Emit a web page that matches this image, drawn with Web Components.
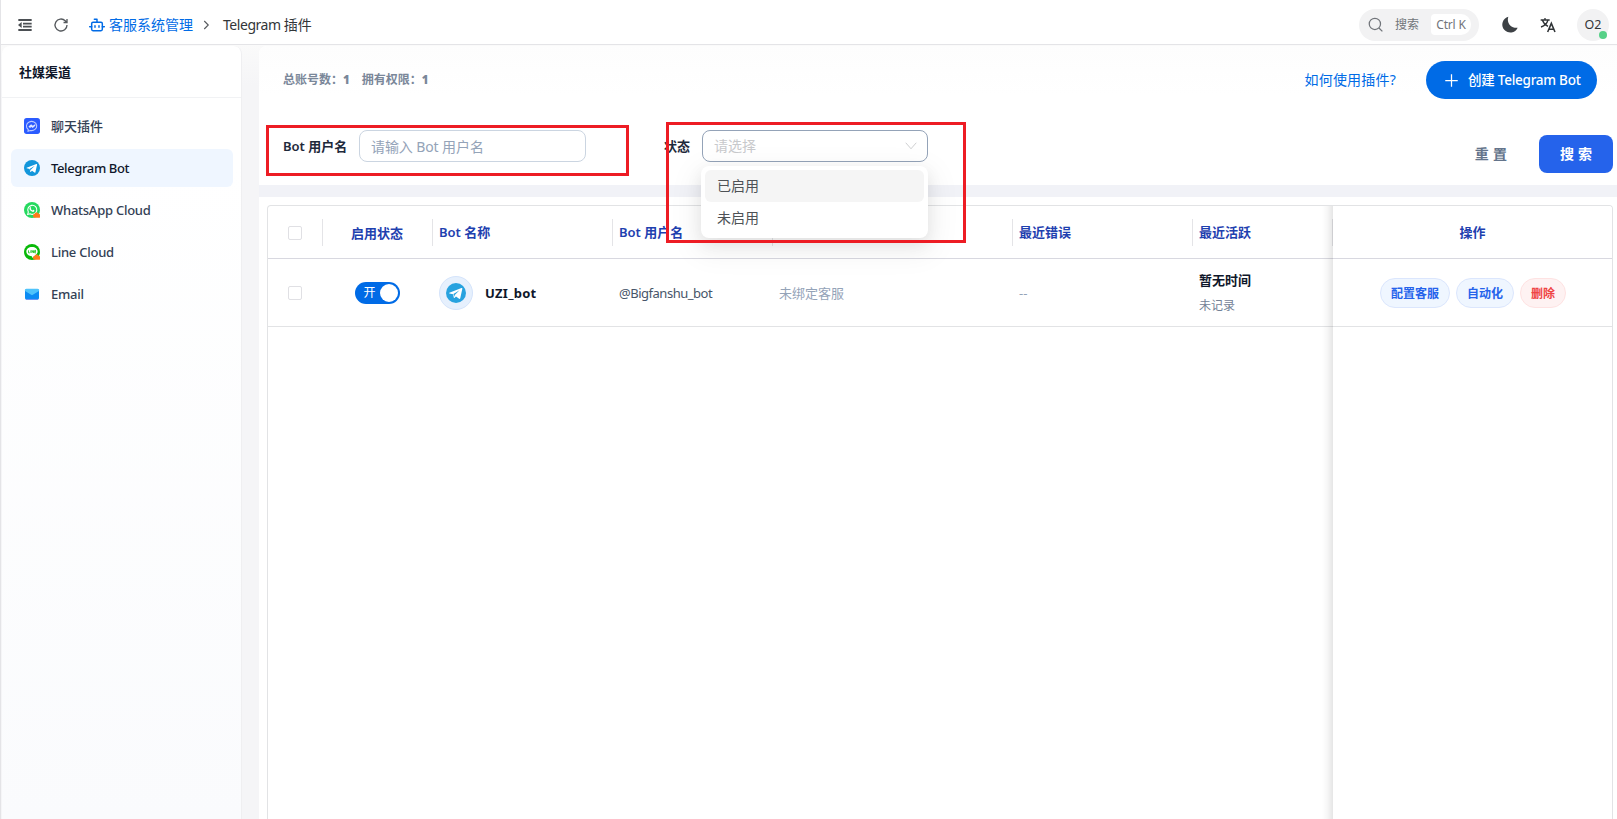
<!DOCTYPE html>
<html lang="zh-CN">
<head>
<meta charset="utf-8">
<title>Telegram 插件</title>
<style>
  html, body {
    margin: 0;
    height: 100%;
    overflow: hidden;
  }

  body {
    font-family: "Noto Sans", "Noto Sans CJK SC", sans-serif;
    font-size: 13px;
    line-height: 20px;
    color: #323639;
    background: #fff;
  }
</style>
</head>
<body>
<admin-page></admin-page>

<script>
// every element clones its own template into an open shadow root
function define(name, html, setup) {
  const template = document.createElement("template");
  template.innerHTML = html;

  customElements.define(name, class extends HTMLElement {
    constructor() {
      super();
      this.attachShadow({ mode: "open" }).appendChild(template.content.cloneNode(true));
    }

    connectedCallback() {
      if (setup) setup(this, this.shadowRoot);
    }
  });
}

const ICONS = {
  fold: `<path fill="currentColor" d="M2 3h20v3H2zM9 8.500h13v2.600H9zM9 13h13v2.600H9zM2 18h20v3H2zM7 7.500v9L1.500 12z"/>`,
  reload: `<path d="M21 12a9 9 0 1 1-2.700-6.400L21 8.200M21 3v5.200h-5.200" fill="none" stroke="currentColor" stroke-width="2"/>`,
  bot: `<g fill="none" stroke="currentColor" stroke-width="2.200" stroke-linejoin="round" stroke-linecap="round"><rect x="4" y="8" width="16" height="12.500" rx="2"/><path d="M12 8V3.500H8M1 14.500h3M20 14.500h3M9 13v2.500M15 13v2.500"/></g>`,
  chevron: `<path d="M8.500 4l8 8-8 8" fill="none" stroke="currentColor" stroke-width="2.200"/>`,
  down: `<path d="M1.500 5.500L12 17.500 22.500 5.500" fill="none" stroke="currentColor" stroke-width="1.800"/>`,
  search: `<g fill="none" stroke="currentColor" stroke-width="2"><circle cx="11" cy="11" r="9"/><path d="M17.500 17.500L23 23"/></g>`,
  moon: `<path fill="currentColor" d="M9.500 .5C6.500 9 13 17.800 23.500 16.800A12 12 0 1 1 9.500 .5z"/>`,
  lang: `<g fill="none" stroke="currentColor" stroke-width="2"><path d="M1 4.500h13.500M7.500 1.500v3M12 4.500C10.500 10 6 13.500 1.500 15M3.500 4.500C5 9 9 12.500 12 14"/><path stroke-width="2.300" d="M11.500 22.500L17 9.500l5.500 13M13.400 18.500h7.200"/></g>`,
  plus: `<path d="M12 2v20M2 12h20" fill="none" stroke="currentColor" stroke-width="2"/>`,
  chat: `<rect width="24" height="24" rx="4" fill="#2b5bff"/><g fill="none" stroke="#bccbff" stroke-width="1.600"><path d="M6.300 17.200A7.700 6.900 0 1 1 9.500 18.700L6 19.800z"/><path stroke="#dde5ff" d="M7.300 13.500l3.400-3 2.300 2 4-2.500M8.500 14.500l2.500-2 2 1.500 3.500-3"/></g>`,
  telegram: `<circle cx="12" cy="12" r="12" fill="var(--plane-bg, #1296db)"/><path fill="#fff" d="M4 11.700L18.600 6c.7-.2 1.200.2 1 1l-2.500 11.300c-.2.800-.7 1-1.400.6l-3.700-2.800-1.900 1.800c-.3.300-.6.300-.7-.2l-.9-4.200L4.200 12.500c-.7-.2-.7-.5-.2-.8z"/><path fill="var(--plane-bg, #1296db)" d="M8.900 13.300l7.300-4.700-5.700 5.700-.5 2.300z"/>`,
  whatsapp: `<circle cx="12" cy="12" r="12" fill="#25d95f"/><path d="M5.500 18.600l1-3.600A6.800 6.800 0 1 1 9 17.600z" fill="none" stroke="#fff" stroke-width="1.600"/><path fill="#fff" d="M9.200 7.800c.6-.4 1 0 1.500 1.500l-.6 1c.6 1.300 1.500 2 2.700 2.500l1-1c1.700.7 2 1 1.600 1.900-1 1.700-3 1.400-5-.1-2.300-2-3-4.500-1.200-5.800z"/><path fill="#ff7a1a" d="M16 23.500a2.800 2.800 0 0 1-.4-5.500 3.700 3.700 0 0 1 6.800 0 2.700 2.700 0 0 1 0 5.500z"/>`,
  line: `<circle cx="12" cy="12" r="12" fill="#08b908"/><path fill="#fff" d="M12 4.500c5 0 8.500 3 8.500 6.700 0 3.500-3.500 6.300-8 9.300-.5.200-.7-.4-.6-2C7 18.200 3.500 15.200 3.500 11.200 3.500 7.500 7 4.500 12 4.500z"/><path d="M6.800 9.500v3.800h2M10.300 9.500v3.800M12 13.300V9.600l2.300 3.500V9.500M18 9.600h-1.900v3.700H18M16.200 11.400H18" fill="none" stroke="#08b908" stroke-width="1.200"/><path fill="#ff7a1a" d="M16 23.500a2.800 2.800 0 0 1-.4-5.500 3.700 3.700 0 0 1 6.800 0 2.700 2.700 0 0 1 0 5.500z"/>`,
  mail: `<rect x="1.500" y="5" width="21" height="15.500" rx="2.500" fill="#0c8bf3"/><path d="M1.500 7.500A2.500 2.500 0 0 1 4 4h16a2.500 2.500 0 0 1 2.500 3.500L12 14z" fill="#4fc3fb"/><path d="M3 20.200h18" stroke="#7b8ff5" stroke-width="1.200"/>`
};

define("ui-icon", `
<style>
  :host {
    display: inline-flex;
    flex: none;
    width: 14px;
    height: 14px;
  }
  svg {
    width: 100%;
    height: 100%;
    display: block;
  }
</style>
<svg viewBox="0 0 24 24"></svg>
`, (el, root) => {
  root.querySelector("svg").innerHTML = ICONS[el.getAttribute("name")] || "";
});

define("app-header", `
<style>
  :host {
    display: flex;
    align-items: center;
    height: 45px;
    box-sizing: border-box;
    padding: 5px 8px 0 16px;
    border-bottom: 1px solid #e4e4e7;
    background: #fff;
    font-size: 14px;
  }
  .fold { width: 16px; height: 16px; color: #4b4f53; }
  .reload { width: 16px; height: 16px; margin-left: 20px; color: #55595d; }
  .bot { width: 16px; height: 16px; margin-left: 20px; }
  .crumb {
    display: flex;
    align-items: center;
    color: #006be6;
  }
  .crumb span { margin-left: 4px; }
  .sep { width: 12px; height: 12px; margin: 0 11px 0 7px; color: #55595d; }
  .title { letter-spacing: -0.45px; }
  .title span { letter-spacing: 0; }
  .search {
    display: flex;
    align-items: center;
    width: 120px;
    height: 32px;
    box-sizing: border-box;
    margin-left: auto;
    padding: 0 8px 0 9px;
    border-radius: 16px;
    background: #f2f2f3;
    font-size: 12px;
    color: #71757a;
  }
  .search ui-icon { width: 15px; height: 15px; }
  .search span { margin-left: 12px; }
  kbd {
    margin-left: auto;
    width: 40px;
    text-align: center;
    font: inherit;
    line-height: 21px;
    letter-spacing: -0.2px;
    border-radius: 4px 10px 10px 4px;
    background: #fff;
  }
  .moon { width: 16px; height: 17px; margin-left: 23px; color: #3d4145; }
  .lang { width: 16px; height: 16px; margin-left: 22px; color: #303437; }
  .avatar {
    position: relative;
    width: 32px;
    line-height: 32px;
    margin-left: 21px;
    border-radius: 50%;
    background: #f2f2f3;
    font-size: 12.500px;
    text-align: center;
  }
  .avatar i {
    position: absolute;
    right: 2px;
    bottom: 2px;
    width: 8px;
    height: 8px;
    border-radius: 50%;
    background: #57d188;
  }
</style>
<ui-icon class="fold" name="fold"></ui-icon>
<ui-icon class="reload" name="reload"></ui-icon>
<div class="crumb"><ui-icon class="bot" name="bot"></ui-icon><span>客服系统管理</span></div>
<ui-icon class="sep" name="chevron"></ui-icon>
<div class="title">Telegram <span>插件</span></div>
<div class="search"><ui-icon name="search"></ui-icon><span>搜索</span><kbd>Ctrl K</kbd></div>
<ui-icon class="moon" name="moon"></ui-icon>
<ui-icon class="lang" name="lang"></ui-icon>
<div class="avatar">O2<i></i></div>
`);

define("channel-item", `
<style>
  :host {
    display: flex;
    align-items: center;
    gap: 11px;
    height: 38px;
    padding-left: 13px;
    border-radius: 6px;
    font-weight: 500;
    letter-spacing: -0.25px;
    color: #334155;
  }
  :host([active]) {
    background: #eff6ff;
    color: #0f172a;
    letter-spacing: -0.38px;
  }
  :host([icon="chat"]) { letter-spacing: 0; }
  ui-icon { width: 16px; height: 16px; }
</style>
<ui-icon></ui-icon><slot></slot>
`, (el, root) => {
  const icon = root.querySelector("ui-icon");
  icon.setAttribute("name", el.getAttribute("icon"));
  icon.shadowRoot.querySelector("svg").innerHTML = ICONS[el.getAttribute("icon")];
});

define("channel-sidebar", `
<style>
  :host {
    display: block;
    width: 240px;
    box-sizing: border-box;
    border-right: 1px solid #efeff1;
    border-radius: 8px 8px 0 0;
    background: linear-gradient(#fff, #fff 15%, #fafbfd);
  }
  h3 {
    margin: 0;
    padding: 0 17px;
    height: 51px;
    line-height: 53px;
    font-size: 13px;
    font-weight: 700;
    color: #0f172a;
    border-bottom: 1px solid #f1f2f4;
  }
  nav {
    display: flex;
    flex-direction: column;
    gap: 4px;
    padding: 9px 8px 0 9px;
  }
</style>
<h3>社媒渠道</h3>
<nav>
  <channel-item icon="chat">聊天插件</channel-item>
  <channel-item icon="telegram" active>Telegram Bot</channel-item>
  <channel-item icon="whatsapp">WhatsApp Cloud</channel-item>
  <channel-item icon="line">Line Cloud</channel-item>
  <channel-item icon="mail">Email</channel-item>
</nav>
`);

define("status-select", `
<style>
  :host {
    display: block;
    position: relative;
    width: 226px;
    font-size: 14px;
  }
  .box {
    display: flex;
    align-items: center;
    justify-content: space-between;
    height: 32px;
    box-sizing: border-box;
    padding: 0 10px 0 11px;
    border: 1px solid #94a3b8;
    border-radius: 8px;
    color: #c8c9cc;
  }
  ui-icon { width: 12px; height: 12px; }
  .menu {
    position: absolute;
    z-index: 5;
    top: 36px;
    left: -1px;
    right: 0;
    padding: 4px;
    border-radius: 8px;
    background: #fff;
    box-shadow: 0 6px 16px rgba(0, 0, 0, .08), 0 9px 28px 8px rgba(0, 0, 0, .05);
  }
  .menu div {
    height: 32px;
    padding-left: 12px;
    line-height: 31px;
    border-radius: 6px;
    color: #4e5256;
  }
  .menu .on { background: #f5f5f5; }
</style>
<div class="box"><span>请选择</span><ui-icon name="down"></ui-icon></div>
<div class="menu"><div class="on">已启用</div><div>未启用</div></div>
`);

define("bot-filters", `
<style>
  :host {
    display: block;
    position: relative;
    height: 139px;
    background: linear-gradient(#fdfdfd, #fff 50px);
    border-radius: 8px 0 0 0;
  }
  .top {
    display: flex;
    align-items: center;
    padding: 15px 20px 0 24px;
    height: 38px;
  }
  .stats {
    display: flex;
    gap: 12px;
    font-size: 12px;
    font-weight: 700;
    color: #7a8799;
  }
  .stats b { font-size: 11.500px; }
  .help {
    margin-left: auto;
    margin-right: 30px;
    font-size: 14px;
    letter-spacing: .2px;
    color: #006be6;
  }
  .create {
    display: flex;
    align-items: center;
    width: 171px;
    height: 38px;
    box-sizing: border-box;
    padding-left: 18px;
    gap: 9px;
    border-radius: 19px;
    background: #006be6;
    color: #fff;
    font-size: 13.500px;
    font-weight: 500;
    white-space: nowrap;
    letter-spacing: -0.25px;
  }
  .create ui-icon { width: 15px; height: 15px; }
  .form {
    display: flex;
    padding: 31px 4px 0 24px;
  }
  label {
    line-height: 32px;
    font-weight: 600;
    color: #1e293b;
    white-space: nowrap;
  }
  .l1 { width: 76px; }
  .l2 { width: 38px; margin-left: 78px; }
  .input {
    width: 227px;
    height: 32px;
    line-height: 31px;
    box-sizing: border-box;
    padding-left: 11px;
    border: 1px solid #cbd5e1;
    border-radius: 8px;
    font-size: 14px;
    letter-spacing: -0.1px;
    color: #94a3b8;
  }
  .actions {
    display: flex;
    margin: 5px 0 0 auto;
    line-height: 38px;
    font-size: 14px;
    font-weight: 700;
    word-spacing: .5px;
  }
  .reset {
    margin-right: 32px;
    color: #64748b;
  }
  .submit {
    width: 74px;
    border-radius: 8px;
    text-align: center;
    background: #2563eb;
    color: #fff;
  }
  .mark {
    position: absolute;
    z-index: 9;
    box-sizing: border-box;
    border: 3px solid #ed1c24;
  }
  .m1 { left: 7px; top: 79px; width: 363px; height: 51px; }
  .m2 { left: 407px; top: 76px; width: 300px; height: 121px; }
</style>
<div class="top">
  <div class="stats"><span>总账号数：<b>1</b></span><span>拥有权限：<b>1</b></span></div>
  <span class="help">如何使用插件?</span>
  <div class="create"><ui-icon name="plus"></ui-icon>创建 Telegram Bot</div>
</div>
<div class="form">
  <label class="l1">Bot 用户名</label>
  <div class="input">请输入 Bot 用户名</div>
  <label class="l2">状态</label>
  <status-select></status-select>
  <div class="actions"><span class="reset">重 置</span><span class="submit">搜 索</span></div>
</div>
<div class="mark m1"></div>
<div class="mark m2"></div>
`);

define("action-pill", `
<style>
  :host {
    display: block;
    height: 30px;
    line-height: 29px;
    box-sizing: border-box;
    padding: 0 10px;
    border: 1px solid #dbe6fd;
    border-radius: 15px;
    background: #eff6ff;
    color: #2563eb;
    font-size: 12px;
    font-weight: 600;
  }
  :host([danger]) {
    border-color: #fee2e2;
    background: #fef2f2;
    color: #ef4444;
  }
</style>
<slot></slot>
`);

define("bot-switch", `
<style>
  :host {
    display: flex;
    align-items: center;
    justify-content: space-between;
    width: 45px;
    height: 22px;
    box-sizing: border-box;
    padding: 0 2px 0 9px;
    border-radius: 11px;
    background: #006be6;
    color: #fff;
    font-size: 12px;
  }
  i {
    width: 18px;
    height: 18px;
    border-radius: 50%;
    background: #fff;
  }
</style>
<slot></slot><i></i>
`);

define("bot-table", `
<style>
  :host {
    display: flex;
    flex-direction: column;
    flex: 1;
    margin: 8px 4px 0 8px;
    border: 1px solid #e2e3e5;
    border-bottom: 0;
    border-radius: 4px 4px 0 0;
    overflow: hidden;
  }
  .row {
    display: grid;
    grid-template-columns: 55px 110px 180px 160px 240px 180px 140px 1fr;
    border-bottom: 1px solid #e2e3e5;
  }
  .row > div {
    display: flex;
    align-items: center;
    padding-left: 6px;
  }
  .row > .mid {
    justify-content: center;
    padding: 1px 2px 0 0;
  }
  .head {
    height: 52px;
    border-color: #d8d8e0;
    color: #1e40af;
    font-weight: 600;
  }
  .head > div { padding-bottom: 1px; }
  .head > div:nth-child(5) { padding-bottom: 3px; }
  .head > div:not(:last-child) {
    background: linear-gradient(#e4e4e7, #e4e4e7) right 13px / 1px 27px no-repeat;
  }
  .body { height: 67px; }
  .rest { flex: 1; border: 0; }
  .check {
    width: 14px;
    height: 14px;
    box-sizing: border-box;
    border: 1px solid #e0e0e4;
    border-radius: 2px;
    background: #fff;
  }
  .row > .fixed {
    position: relative;
    justify-content: center;
    gap: 6px;
    padding: 0;
    background: #fff;
  }
  /* shade thrown by the pinned column */
  .fixed::before {
    content: "";
    position: absolute;
    top: 0;
    bottom: -1px;
    left: -11px;
    width: 11px;
    background: linear-gradient(to left, rgba(0, 0, 0, .1), rgba(0, 0, 0, .035) 50%, transparent);
  }
  .body .fixed { padding: 1px 0 0 1px; }
  .avatar {
    display: flex;
    align-items: center;
    justify-content: center;
    width: 34px;
    height: 34px;
    box-sizing: border-box;
    margin-right: 12px;
    border: 1px solid #d5e4fb;
    border-radius: 50%;
    background: #e6f0fd;
    --plane-bg: #27a2df;
  }
  .avatar ui-icon { width: 20px; height: 20px; }
  .name { font-weight: 700; color: #0f172a; letter-spacing: .25px; }
  .user { color: #475569; letter-spacing: -0.48px; }
  .muted { color: #94a3b8; }
  .time { line-height: 26px; }
  .time b { display: block; color: #0f172a; }
  .time small { display: block; font-size: 12px; color: #738196; }
</style>
<div class="row head">
  <div class="mid"><i class="check"></i></div>
  <div class="mid">启用状态</div>
  <div>Bot 名称</div>
  <div>Bot 用户名</div>
  <div>客服</div>
  <div>最近错误</div>
  <div>最近活跃</div>
  <div class="fixed">操作</div>
</div>
<div class="row body">
  <div class="mid"><i class="check"></i></div>
  <div class="mid"><bot-switch>开</bot-switch></div>
  <div><span class="avatar"><ui-icon name="telegram"></ui-icon></span><span class="name">UZI_bot</span></div>
  <div class="user">@Bigfanshu_bot</div>
  <div class="muted">未绑定客服</div>
  <div class="muted">--</div>
  <div><div class="time"><b>暂无时间</b><small>未记录</small></div></div>
  <div class="fixed">
    <action-pill>配置客服</action-pill>
    <action-pill>自动化</action-pill>
    <action-pill danger>删除</action-pill>
  </div>
</div>
<div class="row rest">
  <div></div><div></div><div></div><div></div><div></div><div></div><div></div>
  <div class="fixed"></div>
</div>
`);

define("admin-page", `
<style>
  :host {
    display: flex;
    flex-direction: column;
    height: 100vh;
    box-sizing: border-box;
    border-left: 1px solid #e4e4e7;
  }
  .content {
    display: flex;
    flex: 1;
    gap: 17px;
    padding: 1px 0 0 1px;
    background: linear-gradient(#fafafa, #f5f5f7 40px);
  }
  main {
    flex: 1;
    display: flex;
    flex-direction: column;
    background: #fff;
    border-radius: 8px 0 0 0;
  }
  .band {
    height: 12px;
    background: #f1f2f7;
  }
</style>
<app-header></app-header>
<div class="content">
  <channel-sidebar></channel-sidebar>
  <main>
    <bot-filters></bot-filters>
    <div class="band"></div>
    <bot-table></bot-table>
  </main>
</div>
`);
</script>
</body>
</html>
